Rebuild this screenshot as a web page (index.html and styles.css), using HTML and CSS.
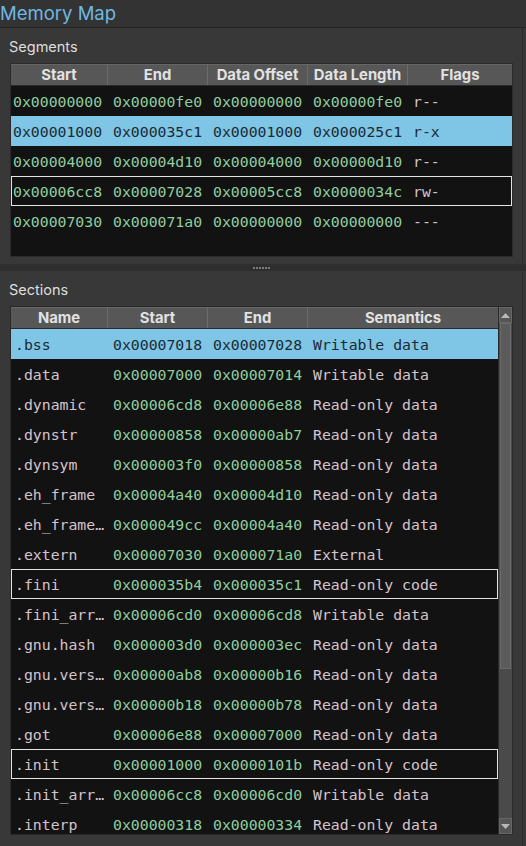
FILE: index.html
```html
<!DOCTYPE html>
<html>
<head>
<meta charset="utf-8">
<link rel="stylesheet" href="styles.css">
</head>
<body>
<div class="titlebar">Memory Map</div>
<div class="pane seg-pane">
  <div class="label">Segments</div>
  <div class="table seg-table">
    <div class="thead seg-cols">
      <div class="th">Start</div><div class="th">End</div><div class="th">Data Offset</div><div class="th">Data Length</div><div class="th last">Flags</div>
    </div>
    <div class="tbody seg-body">
      <div class="row seg-cols"><span class="hex">0x00000000</span><span class="hex">0x00000fe0</span><span class="hex">0x00000000</span><span class="hex">0x00000fe0</span><span class="txt">r--</span></div>
      <div class="row seg-cols sel"><span class="hex">0x00001000</span><span class="hex">0x000035c1</span><span class="hex">0x00001000</span><span class="hex">0x000025c1</span><span class="txt">r-x</span></div>
      <div class="row seg-cols"><span class="hex">0x00004000</span><span class="hex">0x00004d10</span><span class="hex">0x00004000</span><span class="hex">0x00000d10</span><span class="txt">r--</span></div>
      <div class="row seg-cols outl"><span class="hex">0x00006cc8</span><span class="hex">0x00007028</span><span class="hex">0x00005cc8</span><span class="hex">0x0000034c</span><span class="txt">rw-</span></div>
      <div class="row seg-cols"><span class="hex">0x00007030</span><span class="hex">0x000071a0</span><span class="hex">0x00000000</span><span class="hex">0x00000000</span><span class="txt">---</span></div>
    </div>
  </div>
</div>
<div class="splitter"><div class="dots"><i></i><i></i><i></i><i></i><i></i><i></i></div></div>
<div class="pane sec-pane">
  <div class="label">Sections</div>
  <div class="sec-wrap">
    <div class="table sec-table">
      <div class="thead sec-cols">
        <div class="th">Name</div><div class="th">Start</div><div class="th">End</div><div class="th last">Semantics</div>
      </div>
      <div class="tbody sec-body">
        <div class="row sec-cols sel"><span class="txt">.bss</span><span class="hex">0x00007018</span><span class="hex">0x00007028</span><span class="txt">Writable data</span></div>
        <div class="row sec-cols"><span class="txt">.data</span><span class="hex">0x00007000</span><span class="hex">0x00007014</span><span class="txt">Writable data</span></div>
        <div class="row sec-cols"><span class="txt">.dynamic</span><span class="hex">0x00006cd8</span><span class="hex">0x00006e88</span><span class="txt">Read-only data</span></div>
        <div class="row sec-cols"><span class="txt">.dynstr</span><span class="hex">0x00000858</span><span class="hex">0x00000ab7</span><span class="txt">Read-only data</span></div>
        <div class="row sec-cols"><span class="txt">.dynsym</span><span class="hex">0x000003f0</span><span class="hex">0x00000858</span><span class="txt">Read-only data</span></div>
        <div class="row sec-cols"><span class="txt">.eh_frame</span><span class="hex">0x00004a40</span><span class="hex">0x00004d10</span><span class="txt">Read-only data</span></div>
        <div class="row sec-cols"><span class="txt">.eh_frame…</span><span class="hex">0x000049cc</span><span class="hex">0x00004a40</span><span class="txt">Read-only data</span></div>
        <div class="row sec-cols"><span class="txt">.extern</span><span class="hex">0x00007030</span><span class="hex">0x000071a0</span><span class="txt">External</span></div>
        <div class="row sec-cols outl"><span class="txt">.fini</span><span class="hex">0x000035b4</span><span class="hex">0x000035c1</span><span class="txt">Read-only code</span></div>
        <div class="row sec-cols"><span class="txt">.fini_arr…</span><span class="hex">0x00006cd0</span><span class="hex">0x00006cd8</span><span class="txt">Writable data</span></div>
        <div class="row sec-cols"><span class="txt">.gnu.hash</span><span class="hex">0x000003d0</span><span class="hex">0x000003ec</span><span class="txt">Read-only data</span></div>
        <div class="row sec-cols"><span class="txt">.gnu.vers…</span><span class="hex">0x00000ab8</span><span class="hex">0x00000b16</span><span class="txt">Read-only data</span></div>
        <div class="row sec-cols"><span class="txt">.gnu.vers…</span><span class="hex">0x00000b18</span><span class="hex">0x00000b78</span><span class="txt">Read-only data</span></div>
        <div class="row sec-cols"><span class="txt">.got</span><span class="hex">0x00006e88</span><span class="hex">0x00007000</span><span class="txt">Read-only data</span></div>
        <div class="row sec-cols outl"><span class="txt">.init</span><span class="hex">0x00001000</span><span class="hex">0x0000101b</span><span class="txt">Read-only code</span></div>
        <div class="row sec-cols"><span class="txt">.init_arr…</span><span class="hex">0x00006cc8</span><span class="hex">0x00006cd0</span><span class="txt">Writable data</span></div>
        <div class="row sec-cols"><span class="txt">.interp</span><span class="hex">0x00000318</span><span class="hex">0x00000334</span><span class="txt">Read-only data</span></div>
      </div>
    </div>
    <div class="scrollbar">
      <div class="sb-btn"><svg width="9" height="5" viewBox="0 0 9 5"><polygon points="0,5 9,5 4.5,0" fill="#b8b8b8"/></svg></div>
      <div class="sb-track"><div class="sb-thumb"></div></div>
      <div class="sb-btn"><svg width="9" height="5" viewBox="0 0 9 5"><polygon points="0,0 9,0 4.5,5" fill="#b8b8b8"/></svg></div>
    </div>
  </div>
</div>
</body>
</html>
```

FILE: styles.css
```css
* { box-sizing: border-box; }
html, body { margin: 0; padding: 0; }
body {
  width: 526px;
  height: 846px;
  overflow: hidden;
  background: #383838;
  font-family: Inter, "Noto Sans", sans-serif;
  color: #dcdcdc;
}
.titlebar {
  height: 28px;
  background: #333333;
  border-bottom: 1px solid #262626;
  color: #6fb8e3;
  font-size: 18.5px;
  line-height: 26px;
  padding-left: 0;
}
.pane {
  margin-right: 3px;
  border-right: 1px solid #2a2a2a;
  background: #383838;
  padding-left: 10px;
}
.seg-pane { height: 236px; }
.sec-pane { height: 575px; }
.label {
  height: 35px;
  font-size: 14.5px;
  line-height: 37px;
  margin-left: -1px;
  color: #dedede;
}
.table {
  background: #121212;
  border: 1px solid #2a2a2a;
}
.seg-table { width: 503px; }
.thead {
  height: 22px;
  background: #575757;
  border-bottom: 1px solid #2a2a2a;
}
.th {
  font-weight: 700;
  font-size: 14.8px;
  line-height: 20px;
  text-align: center;
  color: #e2e2e2;
  border-right: 1px solid #6c6c6c;
  border-top: 1px solid #666;
}
.th.last { border-right: none; }
.seg-cols {
  display: grid;
  grid-template-columns: 97px 100px 100px 100px 1fr;
}
.sec-cols {
  display: grid;
  grid-template-columns: 97px 100px 100px 1fr;
}
.seg-body { height: 170px; }
.row {
  height: 30px;
  align-items: center;
  font-family: "DejaVu Sans Mono", "Liberation Mono", monospace;
  font-size: 14.8px;
  border: 1px solid transparent;
}
.row > span { padding-left: 4px; padding-top: 2px; white-space: nowrap; overflow: hidden; line-height: 22px; }
.seg-cols.row > span:first-child { padding-left: 1px; }
.sec-cols.row > span:first-child { padding-left: 3px; }
.hex { color: #8fce9f; }
.txt { color: #d5c3cb; }
.row.sel { background: #7ec5e6; }
.row.sel .hex, .row.sel .txt { color: #1c2a33; }
.row.outl { border-color: #e4e4e4; }
.splitter {
  height: 7px;
  background: #2e2e2e;
  display: flex;
  justify-content: center;
  align-items: center;
  padding-right: 3px;
}
.dots { display: flex; gap: 1px; }
.dots i { display: block; width: 2px; height: 2px; background: #7a7a7a; }
.sec-wrap {
  display: flex;
  width: 503px;
  height: 529px;
}
.sec-table {
  width: 488px;
  border-right: none;
}
.sec-body { height: 506px; overflow: hidden; }
.scrollbar {
  width: 15px;
  display: flex;
  flex-direction: column;
  background: #4a4a4a;
  border: 1px solid #2a2a2a;
}
.sb-btn {
  height: 16px;
  background: #555;
  border: 1px solid #666;
  display: flex;
  align-items: center;
  justify-content: center;
}
.sb-track { flex: 1; padding: 0 1px; }
.sb-thumb {
  height: 346px;
  background: #5b5b5b;
  border: 1px solid #6a6a6a;
}
```
